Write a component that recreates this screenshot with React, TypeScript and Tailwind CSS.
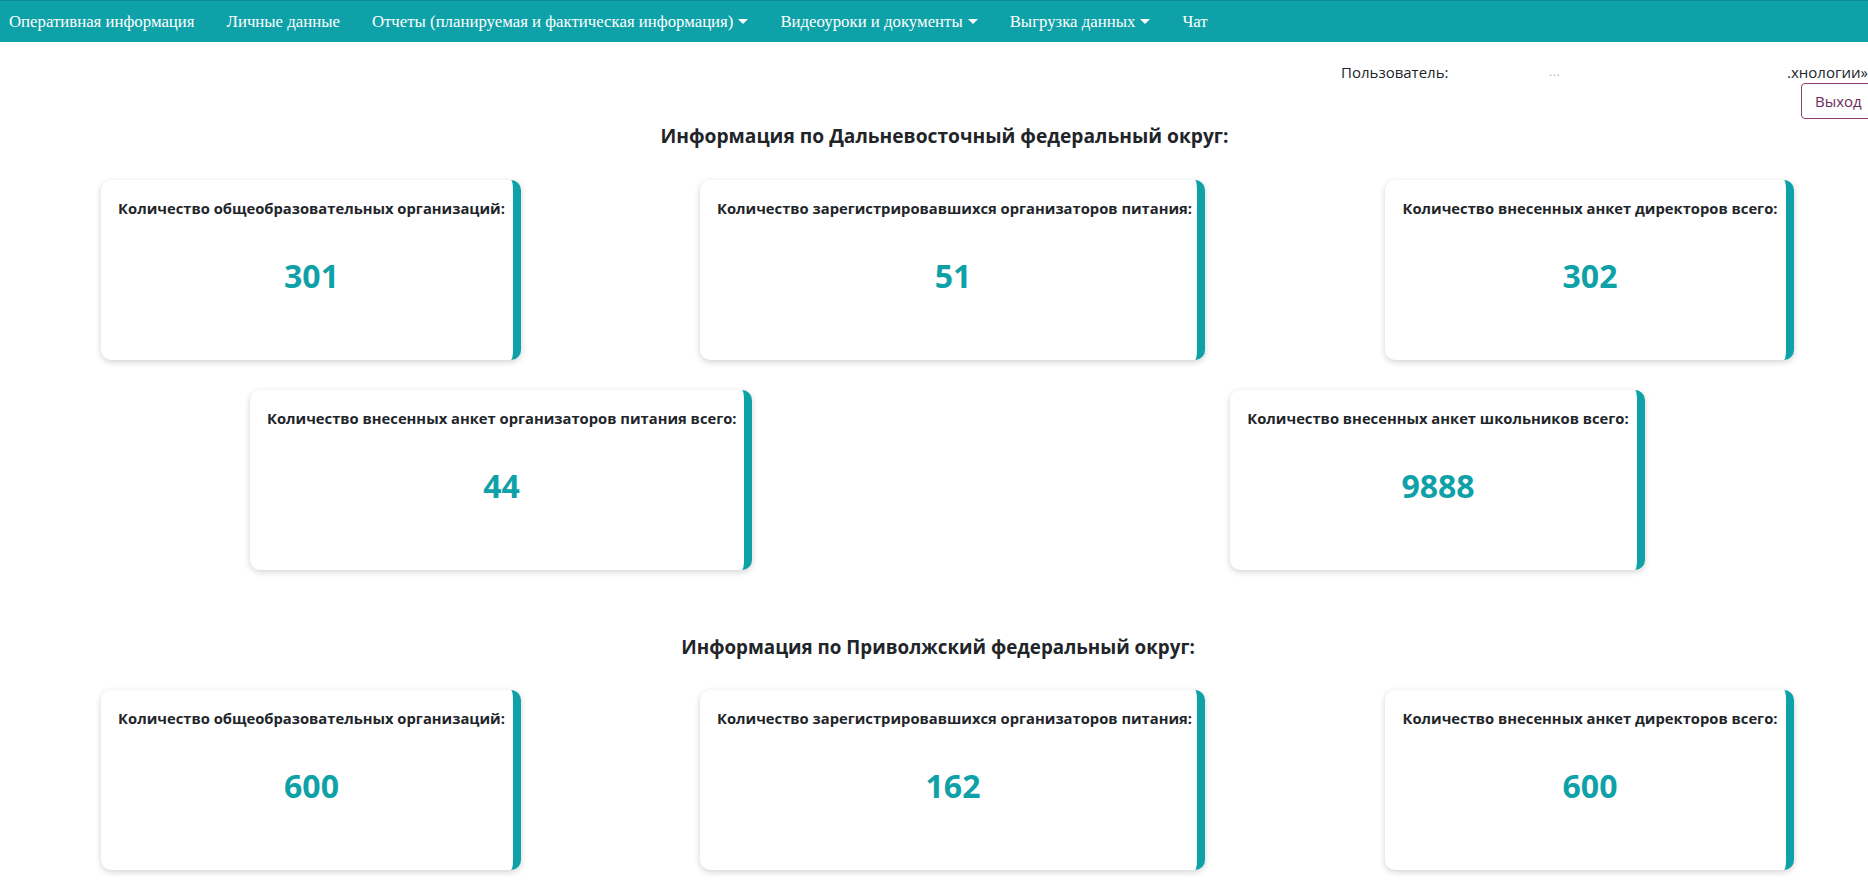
import React from "react";

type Card = { t: string; v: string; w: string; ml: string };

const row1: Card[] = [
  { t: "Количество общеобразовательных организаций:", v: "301", w: "w-[420px]", ml: "ml-[101px]" },
  { t: "Количество зарегистрировавшихся организаторов питания:", v: "51", w: "w-[505px]", ml: "ml-[179px]" },
  { t: "Количество внесенных анкет директоров всего:", v: "302", w: "w-[409px]", ml: "ml-[180px]" },
];
const row2: Card[] = [
  { t: "Количество внесенных анкет организаторов питания всего:", v: "44", w: "w-[502px]", ml: "ml-[250px]" },
  { t: "Количество внесенных анкет школьников всего:", v: "9888", w: "w-[415px]", ml: "ml-[478px]" },
];
const row3: Card[] = [
  { t: "Количество общеобразовательных организаций:", v: "600", w: "w-[420px]", ml: "ml-[101px]" },
  { t: "Количество зарегистрировавшихся организаторов питания:", v: "162", w: "w-[505px]", ml: "ml-[179px]" },
  { t: "Количество внесенных анкет директоров всего:", v: "600", w: "w-[409px]", ml: "ml-[180px]" },
];

function StatCard({ c }: { c: Card }) {
  return (
    <div
      className={`${c.w} ${c.ml} shrink-0 h-[180px] bg-white rounded-[10px] border-r-[8px] border-[#0ea1a7] shadow-[0_2px_6px_rgba(0,0,0,0.18)] pl-[17px] pr-[8px] pt-[18px] text-center`}
    >
      <div className="text-[14.75px] leading-[20px] font-bold text-[#212529] whitespace-nowrap">{c.t}</div>
      <div className="mt-[38px] text-[32px] leading-[40px] font-bold text-[#0ea1a7]">{c.v}</div>
    </div>
  );
}

function Row({ cards, mt }: { cards: Card[]; mt: string }) {
  return (
    <div className={`flex ${mt}`}>
      {cards.map((c, i) => (
        <StatCard key={i} c={c} />
      ))}
    </div>
  );
}

function NavItem({ label, caret }: { label: string; caret?: boolean }) {
  return (
    <div className="flex items-center whitespace-nowrap">
      <span>{label}</span>
      {caret && (
        <span className="inline-block ml-[5px] w-0 h-0 border-t-[5px] border-t-white border-x-[5px] border-x-transparent" />
      )}
    </div>
  );
}

export default function App() {
  return (
    <div className="w-[1868px] min-h-[893px] bg-white overflow-hidden font-['Open_Sans',sans-serif] text-[#212529]">
      <nav className="h-[42px] bg-[#0ea1a7] border-t border-[#0b8e94] flex items-center gap-[32px] pl-[9px] text-white text-[16.8px] font-['Liberation_Serif',serif]">
        <NavItem label="Оперативная информация" />
        <NavItem label="Личные данные" />
        <NavItem label="Отчеты (планируемая и фактическая информация)" caret />
        <NavItem label="Видеоуроки и документы" caret />
        <NavItem label="Выгрузка данных" caret />
        <NavItem label="Чат" />
      </nav>

      <div className="mt-[20px] pl-[1341px] flex text-[15px] leading-[20px] whitespace-nowrap">
        <span className="w-[208px]">Пользователь:</span>
        <span className="w-[238px] text-[#a0a0a0] text-[11px] tracking-[1px]">...</span>
        <span>.хнологии»</span>
      </div>
      <div className="mt-[1px] pl-[1801px] flex">
        <button className="h-[36px] w-[80px] shrink-0 border border-[#8c3f6e] rounded-[4px] text-[#6e2a57] text-[15px] text-left pl-[13px]">
          Выход
        </button>
      </div>

      <h2 className="mt-[3px] pl-[21px] text-center text-[19.2px] leading-[28px] font-bold">
        Информация по Дальневосточный федеральный округ:
      </h2>
      <Row cards={row1} mt="mt-[30px]" />
      <Row cards={row2} mt="mt-[30px]" />

      <h2 className="mt-[63px] pl-[8px] text-center text-[18.8px] leading-[28px] font-bold">
        Информация по Приволжский федеральный округ:
      </h2>
      <Row cards={row3} mt="mt-[29px]" />
      <div className="h-[40px]" />
    </div>
  );
}
